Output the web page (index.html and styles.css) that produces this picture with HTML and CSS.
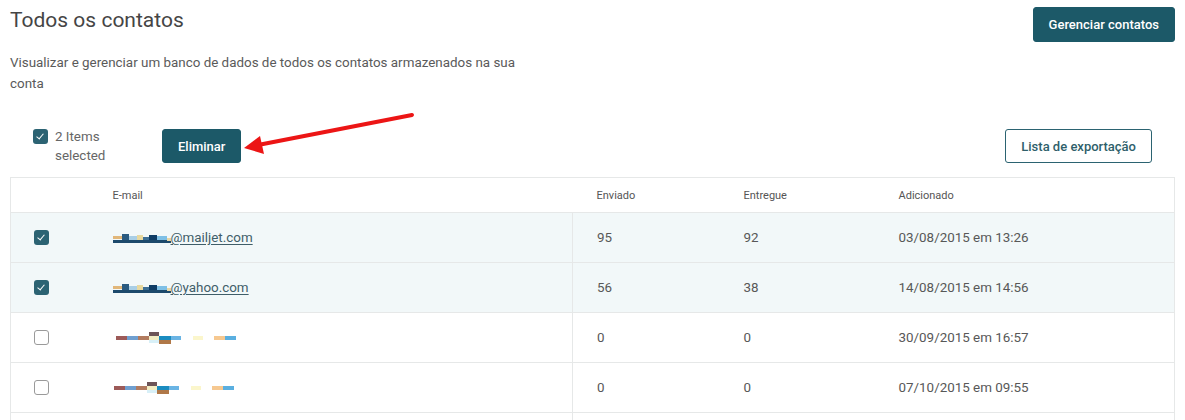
FILE: index.html
```html
<!DOCTYPE html>
<html lang="pt">
    <head>
        <meta charset="UTF-8">
        <meta name="viewport" content="width=device-width, initial-scale=1.0">
        <link rel="stylesheet" href="styles.css">
        <title>Todos os contatos</title>
    </head>
    <body>
        <div class="page-head">
            <div>
                <h1 class="title">Todos os contatos</h1>
                <p class="subtitle">Visualizar e gerenciar um banco de dados de todos os contatos armazenados na sua conta</p>
            </div>
            <button class="btn btn-primary">Gerenciar contatos</button>
        </div>

        <div class="toolbar">
            <div class="select-all">
                <span class="check checked"></span>
                <span class="select-count">2 Items selected</span>
            </div>
            <button class="btn btn-primary btn-delete">Eliminar</button>
            <button class="btn btn-outline">Lista de exportação</button>

            <svg class="arrow" width="180" height="44" viewBox="0 0 180 44">
                <line x1="170" y1="3" x2="16" y2="33" stroke="#ec1515" stroke-width="4" stroke-linecap="round"/>
                <polygon points="2,36 18,24 22,42" fill="#ec1515"/>
            </svg>
        </div>

        <table class="contacts">
            <colgroup>
                <col style="width:78px">
                <col style="width:484px">
                <col style="width:147px">
                <col style="width:155px">
                <col>
            </colgroup>
            <thead>
                <tr>
                    <th></th>
                    <th>E-mail</th>
                    <th>Enviado</th>
                    <th>Entregue</th>
                    <th>Adicionado</th>
                </tr>
            </thead>
            <tbody>
                <tr class="selected">
                    <td><span class="check checked"></span></td>
                    <td>
                        <a class="email" href="#"><svg class="blur" width="58" height="10" viewBox="0 0 58 10">
                            <rect x="0" y="7" width="58" height="3" fill="#1d4a6c"/>
                            <rect x="0" y="3" width="9" height="3" fill="#e1b77a"/>
                            <rect x="9" y="1" width="7" height="6" fill="#2a5b80"/>
                            <rect x="16" y="3" width="8" height="4" fill="#a9cfe6"/>
                            <rect x="24" y="2" width="6" height="5" fill="#e8d9a0"/>
                            <rect x="30" y="4" width="6" height="3" fill="#3c6f96"/>
                            <rect x="36" y="2" width="8" height="5" fill="#0f3d66"/>
                            <rect x="44" y="3" width="10" height="4" fill="#7ec0e6"/>
                            <rect x="54" y="5" width="4" height="3" fill="#e9d7a4"/>
                        </svg>@mailjet.com</a>
                    </td>
                    <td class="first-num">95</td>
                    <td>92</td>
                    <td>03/08/2015 em 13:26</td>
                </tr>
                <tr class="selected">
                    <td><span class="check checked"></span></td>
                    <td>
                        <a class="email" href="#"><svg class="blur" width="58" height="10" viewBox="0 0 58 10">
                            <rect x="0" y="7" width="58" height="3" fill="#1d4a6c"/>
                            <rect x="0" y="3" width="9" height="3" fill="#e1b77a"/>
                            <rect x="9" y="1" width="7" height="6" fill="#2a5b80"/>
                            <rect x="16" y="3" width="8" height="4" fill="#a9cfe6"/>
                            <rect x="24" y="2" width="6" height="5" fill="#e8d9a0"/>
                            <rect x="30" y="4" width="6" height="3" fill="#3c6f96"/>
                            <rect x="36" y="2" width="8" height="5" fill="#0f3d66"/>
                            <rect x="44" y="3" width="10" height="4" fill="#7ec0e6"/>
                            <rect x="54" y="5" width="4" height="3" fill="#e9d7a4"/>
                        </svg>@yahoo.com</a>
                    </td>
                    <td class="first-num">56</td>
                    <td>38</td>
                    <td>14/08/2015 em 14:56</td>
                </tr>
                <tr>
                    <td><span class="check"></span></td>
                    <td>
                        <svg class="blur blur-wide" width="120" height="12" viewBox="0 0 120 12">
                            <rect x="0" y="4" width="11" height="4" fill="#9c5a58"/>
                            <rect x="11" y="4" width="11" height="4" fill="#6f9fd0"/>
                            <rect x="22" y="4" width="11" height="4" fill="#b27b5f"/>
                            <rect x="33" y="0" width="10" height="4" fill="#6d5558"/>
                            <rect x="33" y="4" width="10" height="4" fill="#f3eec4"/>
                            <rect x="33" y="8" width="10" height="3" fill="#d8f0f8"/>
                            <rect x="43" y="4" width="12" height="4" fill="#1a8cc0"/>
                            <rect x="43" y="8" width="12" height="4" fill="#b07848"/>
                            <rect x="55" y="4" width="10" height="4" fill="#6ab4e4"/>
                            <rect x="77" y="4" width="10" height="4" fill="#fbf6cc"/>
                            <rect x="98" y="4" width="11" height="4" fill="#f6c890"/>
                            <rect x="109" y="4" width="11" height="4" fill="#5aafe0"/>
                        </svg>
                    </td>
                    <td class="first-num">0</td>
                    <td>0</td>
                    <td>30/09/2015 em 16:57</td>
                </tr>
                <tr>
                    <td><span class="check"></span></td>
                    <td>
                        <svg class="blur blur-wide shift" width="120" height="12" viewBox="0 0 120 12">
                            <rect x="0" y="4" width="11" height="4" fill="#9c5a58"/>
                            <rect x="11" y="4" width="11" height="4" fill="#6f9fd0"/>
                            <rect x="22" y="4" width="11" height="4" fill="#b27b5f"/>
                            <rect x="33" y="0" width="10" height="4" fill="#6d5558"/>
                            <rect x="33" y="4" width="10" height="4" fill="#f3eec4"/>
                            <rect x="33" y="8" width="10" height="3" fill="#d8f0f8"/>
                            <rect x="43" y="4" width="12" height="4" fill="#1a8cc0"/>
                            <rect x="43" y="8" width="12" height="4" fill="#b07848"/>
                            <rect x="55" y="4" width="10" height="4" fill="#6ab4e4"/>
                            <rect x="77" y="4" width="10" height="4" fill="#fbf6cc"/>
                            <rect x="98" y="4" width="11" height="4" fill="#f6c890"/>
                            <rect x="109" y="4" width="11" height="4" fill="#5aafe0"/>
                        </svg>
                    </td>
                    <td class="first-num">0</td>
                    <td>0</td>
                    <td>07/10/2015 em 09:55</td>
                </tr>
                <tr>
                    <td></td>
                    <td></td>
                    <td class="first-num"></td>
                    <td></td>
                    <td></td>
                </tr>
            </tbody>
        </table>
    </body>
</html>
```

FILE: styles.css
```css
html,
body {
    margin: 0;
    background: #fff;
    font-family: Roboto, "Liberation Sans", sans-serif;
    color: #555;
}

body {
    padding: 0 10px;
}

.page-head {
    display: flex;
    justify-content: space-between;
    align-items: flex-start;
    padding-top: 7px;
}

.title {
    margin: 0;
    font-size: 21px;
    line-height: 27px;
    font-weight: 400;
    color: #454545;
}

.subtitle {
    margin: 18px 0 0 0;
    max-width: 528px;
    font-size: 13.4px;
    line-height: 21px;
    color: #5a5a5a;
}

.btn {
    height: 34px;
    padding: 0 15px;
    font-family: Roboto, "Liberation Sans", sans-serif;
    font-size: 13px;
    font-weight: 500;
    border-radius: 3px;
    cursor: pointer;
}

.btn-primary {
    background-color: #1c5968;
    border: 1px solid #1c5968;
    color: #fff;
}

.page-head .btn-primary {
    height: 35px;
}

.btn-outline {
    background-color: #fff;
    border: 1px solid #2b6371;
    color: #2f5f6b;
    margin-left: auto;
    margin-right: 23px;
}

.toolbar {
    display: flex;
    align-items: flex-start;
    margin-top: 35px;
    position: relative;
}

.select-all {
    display: flex;
    align-items: flex-start;
    padding-left: 23px;
    width: 129px;
}

.select-count {
    width: 56px;
    margin-left: 7px;
    margin-top: -2px;
    font-size: 13.4px;
    line-height: 19px;
    color: #666;
}

.arrow {
    position: absolute;
    left: 232px;
    top: -17px;
}

.check {
    display: inline-block;
    box-sizing: border-box;
    width: 15px;
    height: 15px;
    border: 1.5px solid #9a9a9a;
    border-radius: 3px;
    background: #fff;
    vertical-align: middle;
    position: relative;
}

.check.checked {
    border: none;
    background: #2c6373;
}

.check.checked::after {
    content: '';
    position: absolute;
    left: 5px;
    top: 3px;
    width: 3px;
    height: 6px;
    border-right: 1.5px solid #fff;
    border-bottom: 1.5px solid #fff;
    transform: rotate(40deg);
}

.contacts {
    width: 100%;
    margin-top: 12px;
    border-collapse: collapse;
    table-layout: fixed;
    border: 1px solid #e6e8e8;
    font-size: 13.4px;
}

.contacts th {
    height: 34px;
    padding: 0 0 0 24px;
    text-align: left;
    font-size: 11px;
    font-weight: 400;
    color: #555;
    border-bottom: 1px solid #e6e8e8;
}

.contacts td {
    height: 49px;
    padding: 0 0 0 24px;
    border-bottom: 1px solid #e6e8e8;
    color: #585858;
}

.contacts td:first-child {
    padding-left: 23px;
}

.contacts td.first-num {
    border-left: 1px solid #e6e8e8;
}

.contacts tr.selected td {
    background-color: #f2f8f9;
}

.email {
    color: #3f5e69;
    text-decoration: underline;
    text-underline-offset: 2px;
}

.blur {
    vertical-align: -1px;
}

.blur-wide {
    margin-left: 3px;
    vertical-align: middle;
}

.blur-wide.shift {
    margin-left: 1px;
}
```
